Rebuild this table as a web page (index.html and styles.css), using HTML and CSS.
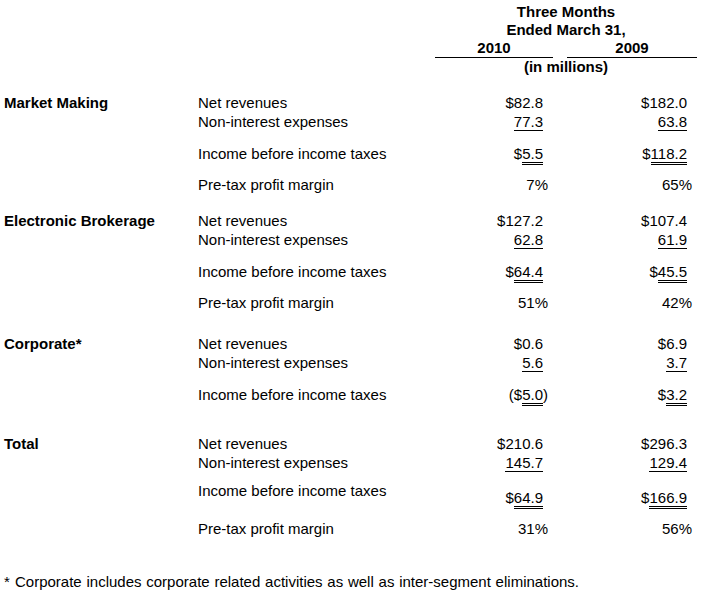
FILE: index.html
```html
<!DOCTYPE html>
<html lang="en">
<head>
<meta charset="utf-8">
<title>Segment results</title>
<link rel="stylesheet" href="styles.css">
</head>
<body>
<div class="sheet">
  <div class="head">
    <div class="row hrow"><div class="hspan bold">Three Months</div></div>
    <div class="row hrow"><div class="hspan bold">Ended March 31,</div></div>
    <div class="row hrow">
      <div class="year y1 bold">2010</div>
      <div class="year y2 bold">2009</div>
    </div>
    <div class="row hrow"><div class="hspan bold">(in millions)</div></div>
  </div>

  <section class="seg mt17">
    <div class="row">
      <div class="name bold">Market Making</div>
      <div class="item">Net revenues</div>
      <div class="v v1">$82.8</div>
      <div class="v v2">$182.0</div>
    </div>
    <div class="row">
      <div class="item">Non-interest expenses</div>
      <div class="v v1"><span class="u1">77.3</span></div>
      <div class="v v2"><span class="u1">63.8</span></div>
    </div>
    <div class="row row-income">
      <div class="item">Income before income taxes</div>
      <div class="v v1">$<span class="u2">5.5</span></div>
      <div class="v v2">$<span class="u2">118.2</span></div>
    </div>
    <div class="row row-margin">
      <div class="item">Pre-tax profit margin</div>
      <div class="v v1 pct">7%</div>
      <div class="v v2 pct">65%</div>
    </div>
  </section>

  <section class="seg mt17">
    <div class="row">
      <div class="name bold">Electronic Brokerage</div>
      <div class="item">Net revenues</div>
      <div class="v v1">$127.2</div>
      <div class="v v2">$107.4</div>
    </div>
    <div class="row">
      <div class="item">Non-interest expenses</div>
      <div class="v v1"><span class="u1">62.8</span></div>
      <div class="v v2"><span class="u1">61.9</span></div>
    </div>
    <div class="row row-income">
      <div class="item">Income before income taxes</div>
      <div class="v v1">$<span class="u2">64.4</span></div>
      <div class="v v2">$<span class="u2">45.5</span></div>
    </div>
    <div class="row row-margin">
      <div class="item">Pre-tax profit margin</div>
      <div class="v v1 pct">51%</div>
      <div class="v v2 pct">42%</div>
    </div>
  </section>

  <section class="seg mt22">
    <div class="row">
      <div class="name bold">Corporate*</div>
      <div class="item">Net revenues</div>
      <div class="v v1">$0.6</div>
      <div class="v v2">$6.9</div>
    </div>
    <div class="row">
      <div class="item">Non-interest expenses</div>
      <div class="v v1"><span class="u1">5.6</span></div>
      <div class="v v2"><span class="u1">3.7</span></div>
    </div>
    <div class="row row-income">
      <div class="item">Income before income taxes</div>
      <div class="v v1 paren">($<span class="u2">5.0</span>)</div>
      <div class="v v2">$<span class="u2">3.2</span></div>
    </div>
  </section>

  <section class="seg mt30">
    <div class="row">
      <div class="name bold">Total</div>
      <div class="item">Net revenues</div>
      <div class="v v1">$210.6</div>
      <div class="v v2">$296.3</div>
    </div>
    <div class="row">
      <div class="item">Non-interest expenses</div>
      <div class="v v1"><span class="u1">145.7</span></div>
      <div class="v v2"><span class="u1">129.4</span></div>
    </div>
    <div class="row row-income row-total-income">
      <div class="item">Income before income taxes</div>
      <div class="v v1 low">$<span class="u2">64.9</span></div>
      <div class="v v2 low">$<span class="u2">166.9</span></div>
    </div>
    <div class="row row-margin">
      <div class="item">Pre-tax profit margin</div>
      <div class="v v1 pct">31%</div>
      <div class="v v2 pct">56%</div>
    </div>
  </section>

  <p class="note"><span class="star">*</span>Corporate includes corporate related activities as well as inter-segment eliminations.</p>
</div>
</body>
</html>
```

FILE: styles.css
```css
html, body {
  margin: 0;
  padding: 0;
  background: #ffffff;
}

body {
  font-family: "Liberation Sans", Arial, Helvetica, sans-serif;
  font-size: 15px;
  color: #000000;
}

.sheet {
  padding: 3px 0 0 4px;
}

.bold {
  font-weight: bold;
}

.row {
  display: grid;
  grid-template-columns: 194px 237px 118px 14px 130px;
  line-height: 19px;
  white-space: nowrap;
}

.row.hrow {
  line-height: 18px;
}

.hspan {
  grid-column: 3 / 6;
  text-align: center;
}

.year {
  text-align: center;
  border-bottom: 1px solid #000;
}

.y1 { grid-column: 3; }
.y2 { grid-column: 5; }

.name { grid-column: 1; }
.item { grid-column: 2; }

.v {
  text-align: right;
  padding-right: 10px;
}

.v1 { grid-column: 3; }
.v2 { grid-column: 5; }

.v.pct { padding-right: 5px; }
.v.paren { padding-right: 5px; }

.u1 {
  border-bottom: 1px solid #000;
}

.u2 {
  border-bottom: 3px double #000;
}

.mt17 { margin-top: 17px; }
.mt22 { margin-top: 22px; }
.mt30 { margin-top: 30px; }

.row-income { margin-top: 13px; }
.row-margin { margin-top: 12px; }
.row-total-income { margin-top: 9px; }
.v.low { padding-top: 7px; }

.note {
  margin: 34px 0 0 0;
  line-height: 19px;
  word-spacing: 0.6px;
}

.star {
  display: inline-block;
  width: 11px;
}
```
